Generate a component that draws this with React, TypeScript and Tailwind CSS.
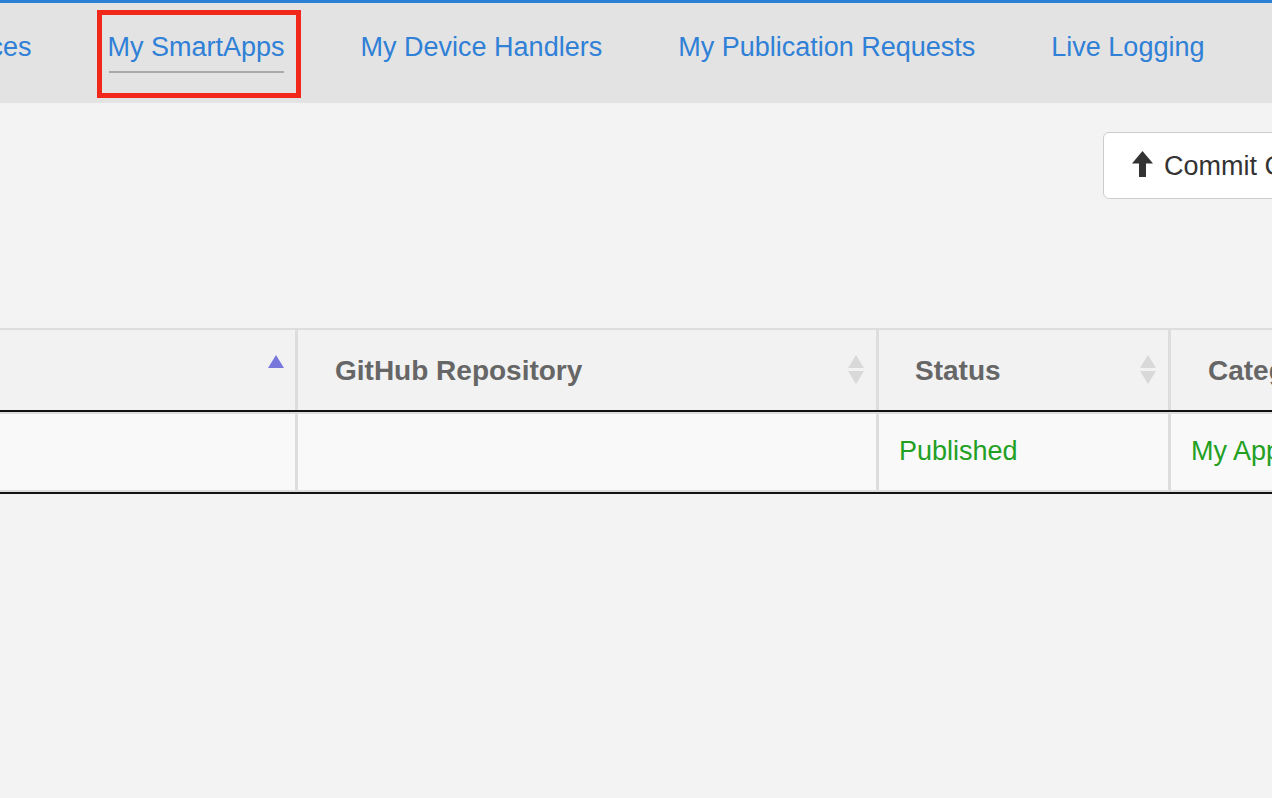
import React from 'react';

const navItems = [
  'My Devices',
  'My SmartApps',
  'My Device Handlers',
  'My Publication Requests',
  'Live Logging',
];

function ArrowUp(): JSX.Element {
  return (
    <svg width="21" height="26" viewBox="0 0 21 26" className="shrink-0">
      <path d="M10.5 0 L21 12.5 L14 12.5 L14 26 L7 26 L7 12.5 L0 12.5 Z" fill="#333333" />
    </svg>
  );
}

function SortBoth(): JSX.Element {
  return (
    <svg width="16" height="30" viewBox="0 0 16 30" className="shrink-0">
      <path d="M8 0 L16 13 L0 13 Z" fill="#d9d9d9" />
      <path d="M0 16 L16 16 L8 29 Z" fill="#d9d9d9" />
    </svg>
  );
}

function SortAsc(): JSX.Element {
  return (
    <svg width="16" height="14" viewBox="0 0 16 14" className="shrink-0">
      <path d="M8 0 L16 13 L0 13 Z" fill="#7878dc" />
    </svg>
  );
}

export default function App(): JSX.Element {
  return (
    <div
      className="h-[798px] w-[1272px] overflow-hidden bg-[#f3f3f3]"
      style={{ fontFamily: '"Liberation Sans", Arial, sans-serif' }}
    >
      <nav className="h-[103px] border-t-[3px] border-[#2b80d6] bg-[#e3e3e3]">
        <ul className="ml-[-108px] flex gap-[76px] pt-[29px]">
          {navItems.map((item) => {
            const active = item === 'My SmartApps';
            return (
              <li key={item} className="relative shrink-0">
                <a className="block whitespace-nowrap text-[27px] leading-[31px] text-[#2f80d6]">{item}</a>
                {active ? (
                  <>
                    <div className="mx-[1px] mt-[8px] h-[2px] bg-[#a9a9a9]" />
                    <span className="pointer-events-none absolute -top-[22px] -left-[11px] -right-[16px] -bottom-[25px] border-[5px] border-[#f2271c]" />
                  </>
                ) : null}
              </li>
            );
          })}
        </ul>
      </nav>

      <div className="flex pt-[29px]">
        <button
          type="button"
          className="ml-[1103px] flex h-[67px] shrink-0 items-start gap-[11px] rounded-[6px] border-[1.5px] border-[#cccccc] bg-white px-[28px] pt-[18px] text-[27px] leading-[31px] text-[#333333]"
        >
          <ArrowUp />
          <span className="whitespace-nowrap">Commit Changes</span>
        </button>
      </div>

      <div className="mt-[129px] w-[1500px] border-t-2 border-[#dddddd]">
        <div className="flex h-[82px] border-b-2 border-[#111111] bg-[#f2f2f2] font-bold text-[#666666]">
          <div className="flex w-[295px] shrink-0 pr-[11px] pt-[25px]">
            <div className="ml-auto">
              <SortAsc />
            </div>
          </div>
          <div className="flex w-[581px] shrink-0 border-l-[3px] border-[#dddddd] pl-[37px] pr-[12px]">
            <span className="pt-[25px] text-[28px] leading-[32px]">GitHub Repository</span>
            <div className="ml-auto pt-[25px]">
              <SortBoth />
            </div>
          </div>
          <div className="flex w-[292px] shrink-0 border-l-[3px] border-[#dddddd] pl-[36px] pr-[12px]">
            <span className="pt-[25px] text-[28px] leading-[32px]">Status</span>
            <div className="ml-auto pt-[25px]">
              <SortBoth />
            </div>
          </div>
          <div className="flex w-[300px] shrink-0 border-l-[3px] border-[#dddddd] pl-[37px]">
            <span className="pt-[25px] text-[28px] leading-[32px]">Category</span>
          </div>
        </div>
        <div className="flex h-[80px] border-y-2 border-t-[#dddddd] border-b-[#dddddd] bg-[#f9f9f9] text-[27px] leading-[31px] text-[#23a023] shadow-[0_2px_0_#111111]">
          <div className="w-[295px] shrink-0" />
          <div className="w-[581px] shrink-0 border-l-[3px] border-[#dddddd]" />
          <div className="w-[292px] shrink-0 border-l-[3px] border-[#dddddd] pl-[20px] pt-[22px]">Published</div>
          <div className="w-[300px] shrink-0 border-l-[3px] border-[#dddddd] pl-[20px] pt-[22px]">My Apps</div>
        </div>
      </div>
    </div>
  );
}
